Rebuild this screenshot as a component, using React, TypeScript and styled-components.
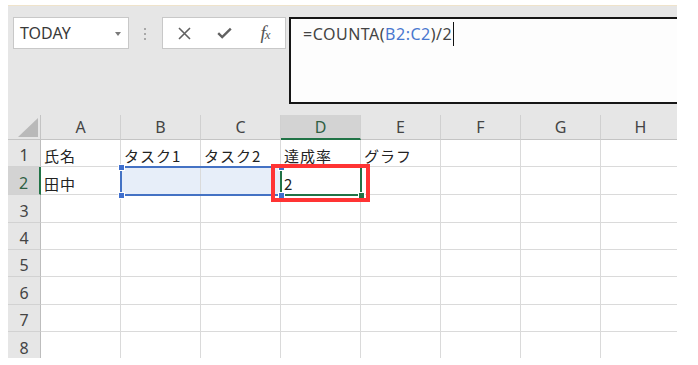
import React from "react";
import styled, { createGlobalStyle } from "styled-components";

const Global = createGlobalStyle`
  html, body { margin: 0; padding: 0; background: #ffffff; }
  body { font-family: "Noto Sans", "Noto Sans CJK JP", sans-serif; }
`;

const Page = styled.div`
  padding: 5px 0 0 8px;
`;

const Frame = styled.div`
  width: 669px;
  height: 352px;
  border-top: 1px solid #efe3cb;
  background: #e6e6e6;
  overflow: hidden;
  display: flex;
  flex-direction: column;
`;

const Toolbar = styled.div`
  height: 109px;
  flex: none;
  box-sizing: border-box;
  padding: 11px 0 0 5px;
  display: flex;
  align-items: flex-start;
  & > * {
    flex: none;
  }
`;

const NameBox = styled.div`
  width: 116px;
  height: 32px;
  box-sizing: border-box;
  border: 1px solid #c8c8c8;
  background: #ffffff;
  display: flex;
  align-items: center;
  justify-content: space-between;
  padding: 0 7px 0 6px;
  font-family: "Noto Sans", sans-serif;
  font-size: 16px;
  color: #3a3a3a;
`;

const Caret = styled.span`
  width: 0;
  height: 0;
  border-left: 3.5px solid transparent;
  border-right: 3.5px solid transparent;
  border-top: 4px solid #7a7a7a;
  margin-top: 1px;
`;

const Grip = styled.div`
  margin: 11px 0 0 15px;
  display: flex;
  flex-direction: column;
  gap: 3px;
`;

const GripDot = styled.span`
  width: 2px;
  height: 2px;
  background: #a8a8a8;
`;

const FuncBox = styled.div`
  margin-left: 16px;
  width: 124px;
  height: 32px;
  box-sizing: border-box;
  border: 1px solid #c8c8c8;
  background: #ffffff;
  display: flex;
  align-items: center;
  padding-left: 1px;
`;

const IconSlot = styled.div`
  width: 40px;
  height: 30px;
  display: flex;
  align-items: center;
  justify-content: center;
  color: #616161;
`;

const Fx = styled.span`
  font-family: "Liberation Serif", serif;
  font-style: italic;
  font-size: 19px;
  color: #555555;
  letter-spacing: -1px;
  margin-left: 2px;
  sub {
    font-size: 13px;
    vertical-align: 0;
  }
`;

const FormulaBox = styled.div`
  margin-left: 3px;
  width: 420px;
  height: 87px;
  box-sizing: border-box;
  border: 2px solid #161616;
  background: #fdfdfd;
  padding: 3px 0 0 12px;
  font-family: "Noto Sans", sans-serif;
  font-size: 16px;
  line-height: 24px;
  letter-spacing: 0.5px;
  color: #444444;
  display: flex;
  align-items: flex-start;
`;

const Ref = styled.span`
  color: #4a78cf;
`;

const TextCursor = styled.span`
  display: inline-block;
  width: 1px;
  height: 24px;
  background: #111111;
  margin-left: 1px;
`;

const Sheet = styled.div`
  position: relative;
  display: grid;
  grid-template-columns: 33px repeat(8, 80px);
  grid-template-rows: 25px 27px 28px 28px 27px 27px 28px 27px 28px;
  flex: none;
`;

const Corner = styled.div`
  box-sizing: border-box;
  background: #e6e6e6;
  border-right: 1px solid #c4c4c4;
  border-bottom: 1px solid #c4c4c4;
  display: flex;
  align-items: flex-end;
  justify-content: flex-end;
  padding: 0 2px 2px 0;
`;

const CornerMark = styled.span`
  width: 20px;
  height: 19px;
  background: #b9b9b9;
  clip-path: polygon(100% 0, 100% 100%, 0 100%);
`;

const ColHead = styled.div<{ $active?: boolean }>`
  box-sizing: border-box;
  background: ${(p) => (p.$active ? "#d3d3d3" : "#e6e6e6")};
  border-right: 1px solid #d0d0d0;
  border-bottom: ${(p) => (p.$active ? "2px solid #217346" : "1px solid #c4c4c4")};
  display: flex;
  align-items: center;
  justify-content: center;
  font-family: "Noto Sans", sans-serif;
  font-size: 16px;
  color: ${(p) => (p.$active ? "#2f5f43" : "#444444")};
  padding-top: ${(p) => (p.$active ? "1px" : "0")};
`;

const RowHead = styled.div<{ $active?: boolean }>`
  box-sizing: border-box;
  background: ${(p) => (p.$active ? "#d3d3d3" : "#e6e6e6")};
  border-right: ${(p) => (p.$active ? "2px solid #217346" : "1px solid #bdbdbd")};
  border-bottom: 1px solid #d2d2d2;
  display: flex;
  align-items: center;
  justify-content: center;
  padding-top: 4px;
  font-family: "Noto Sans", sans-serif;
  font-size: 16px;
  color: ${(p) => (p.$active ? "#2f5f43" : "#444444")};
`;

const Cell = styled.div<{ $sel?: boolean }>`
  box-sizing: border-box;
  background: ${(p) => (p.$sel ? "#e7eef9" : "#ffffff")};
  border-right: 1px solid #dadada;
  border-bottom: 1px solid #dadada;
  display: flex;
  align-items: flex-end;
  padding: 0 0 3px 3px;
  font-family: "Noto Sans CJK JP", "Noto Sans", sans-serif;
  font-size: 15px;
  line-height: 15px;
  letter-spacing: 1px;
  color: #222222;
  white-space: nowrap;
  overflow: hidden;
`;

const RangeBox = styled.div`
  position: absolute;
  left: 112px;
  top: 51px;
  width: 162px;
  height: 30px;
  box-sizing: border-box;
  border: 2px solid #4472c4;
  pointer-events: none;
`;

const ActiveBox = styled.div`
  position: absolute;
  left: 272px;
  top: 51px;
  width: 82px;
  height: 30px;
  box-sizing: border-box;
  border: 2px solid #217346;
  pointer-events: none;
`;

const Handle = styled.span<{ $color: string }>`
  position: absolute;
  width: 5px;
  height: 5px;
  background: ${(p) => p.$color};
  box-shadow: 0 0 0 1px #ffffff;
`;

const Highlight = styled.div`
  position: absolute;
  left: 263px;
  top: 49px;
  width: 99px;
  height: 38px;
  box-sizing: border-box;
  border: 4px solid #ff3434;
  pointer-events: none;
`;

const columns = ["A", "B", "C", "D", "E", "F", "G", "H"];
const data: Record<number, Record<string, string>> = {
  1: { A: "氏名", B: "タスク1", C: "タスク2", D: "達成率", E: "グラフ" },
  2: { A: "田中", D: "2" },
};

const handles: { x: number; y: number; color: string }[] = [
  { x: 113, y: 52, color: "#3f6fce" },
  { x: 113, y: 80, color: "#3f6fce" },
  { x: 273, y: 52, color: "#3f6fce" },
  { x: 273, y: 80, color: "#3f6fce" },
  { x: 353, y: 80, color: "#217346" },
];

export default function App() {
  return (
    <>
      <Global />
      <Page>
        <Frame>
          <Toolbar>
            <NameBox>
              TODAY
              <Caret />
            </NameBox>
            <Grip>
              <GripDot />
              <GripDot />
              <GripDot />
            </Grip>
            <FuncBox>
              <IconSlot>
                <svg width="13" height="13" viewBox="0 0 13 13">
                  <path d="M1 1 L12 12 M12 1 L1 12" stroke="currentColor" strokeWidth="1.6" />
                </svg>
              </IconSlot>
              <IconSlot>
                <svg width="15" height="12" viewBox="0 0 15 12">
                  <path d="M1.2 6.2 L5.2 10 L13.8 1.6" stroke="currentColor" strokeWidth="2.4" fill="none" />
                </svg>
              </IconSlot>
              <IconSlot>
                <Fx>
                  f<sub>x</sub>
                </Fx>
              </IconSlot>
            </FuncBox>
            <FormulaBox>
              <span>
                =COUNTA(<Ref>B2:C2</Ref>)/2
              </span>
              <TextCursor />
            </FormulaBox>
          </Toolbar>
          <Sheet>
            <Corner>
              <CornerMark />
            </Corner>
            {columns.map((c) => (
              <ColHead key={c} $active={c === "D"}>
                {c}
              </ColHead>
            ))}
            {[1, 2, 3, 4, 5, 6, 7, 8].map((r) => (
              <React.Fragment key={r}>
                <RowHead $active={r === 2}>{r}</RowHead>
                {columns.map((c) => (
                  <Cell key={c} $sel={r === 2 && (c === "B" || c === "C")}>
                    {data[r]?.[c] ?? ""}
                  </Cell>
                ))}
              </React.Fragment>
            ))}
            <RangeBox />
            <ActiveBox />
            {handles.map((h, i) => (
              <Handle
                key={i}
                $color={h.color}
                style={{ left: h.x - 2.5, top: h.y - 2.5 }}
              />
            ))}
            <Highlight />
          </Sheet>
        </Frame>
      </Page>
    </>
  );
}
